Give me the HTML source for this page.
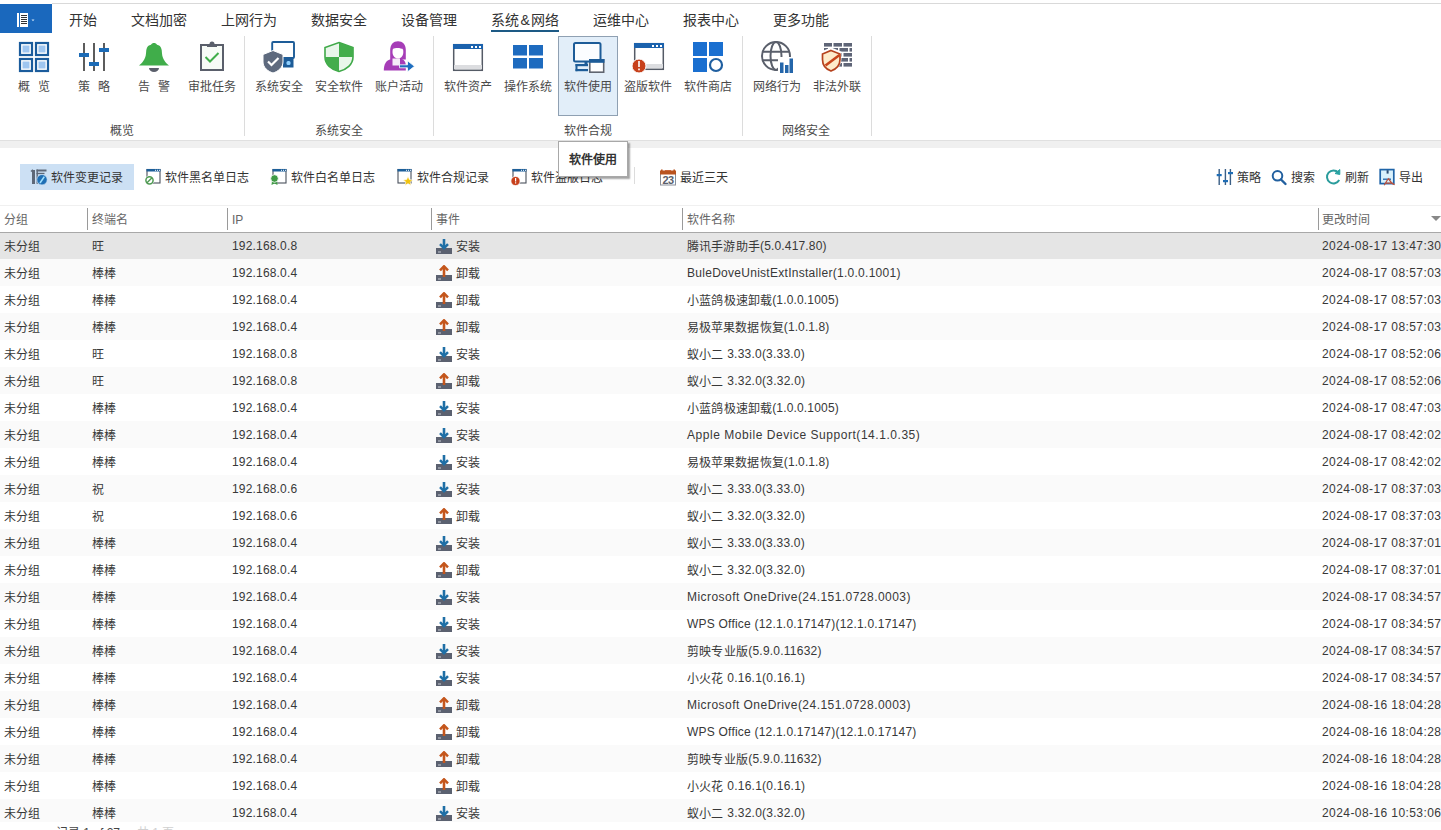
<!DOCTYPE html>
<html lang="zh-CN">
<head>
<meta charset="utf-8">
<style>
*{box-sizing:border-box;margin:0;padding:0}
html,body{width:1441px;height:830px;overflow:hidden;background:#fff}
body{position:relative;font-family:"Liberation Sans",sans-serif;font-size:12px;color:#333}
.a{position:absolute;white-space:nowrap}
.tab{position:absolute;top:11px;font-size:14px;line-height:19px;color:#333;white-space:nowrap}
.rl{position:absolute;top:79px;font-size:12px;line-height:16px;color:#4a4a4a;white-space:nowrap;text-align:center}
.gl{position:absolute;top:123px;font-size:12px;line-height:16px;color:#4a4a4a;white-space:nowrap;text-align:center}
.vs{position:absolute;top:36px;height:100px;width:1px;background:#dcdcdc}
.ico{position:absolute;top:41px}
.tb{position:absolute;top:170px;font-size:12px;line-height:16px;color:#333;white-space:nowrap}
.hd{position:absolute;top:212px;font-size:12px;line-height:16px;color:#666;white-space:nowrap}
.hs{position:absolute;top:208px;height:22px;width:1px;background:#9a9a9a}
.row{position:absolute;left:0;width:1441px;height:27px}
.c{position:absolute;top:7px;line-height:16px;color:#383838;white-space:nowrap}
.ic{position:absolute;top:6px;width:17px;height:17px}
.ic svg{display:block}
</style>
</head>
<body>
<!-- top line -->
<div class="a" style="left:52px;top:3px;width:1389px;height:1px;background:#d9d9d9"></div>
<!-- app button -->
<div class="a" style="left:0;top:4px;width:52px;height:29px;background:#1a68bd">
<svg width="52" height="29" viewBox="0 0 52 29"><rect x="17" y="9" width="2" height="14" fill="#fff"/><rect x="20" y="9" width="8" height="14" fill="#fff"/><rect x="21" y="11" width="6" height="1" fill="#333"/><rect x="21" y="13" width="6" height="1" fill="#333"/><rect x="21" y="15" width="6" height="1" fill="#333"/><rect x="21" y="17" width="6" height="1" fill="#333"/><rect x="21" y="19" width="6" height="1" fill="#333"/><path d="M31.5 15.5h3l-1.5 1.8z" fill="#cfe4f7"/></svg>
</div>
<!-- tabs -->
<div class="tab" style="left:69px">开始</div>
<div class="tab" style="left:131px">文档加密</div>
<div class="tab" style="left:221px">上网行为</div>
<div class="tab" style="left:311px">数据安全</div>
<div class="tab" style="left:401px">设备管理</div>
<div class="tab" style="left:491px">系统<span style="margin:0 1.5px">&amp;</span>网络</div>
<div class="a" style="left:491px;top:30px;width:68px;height:2px;background:#1d5a85"></div>
<div class="tab" style="left:593px">运维中心</div>
<div class="tab" style="left:683px">报表中心</div>
<div class="tab" style="left:773px">更多功能</div>

<!-- ribbon -->
<div class="a" style="left:558px;top:36px;width:60px;height:80px;background:#e2eef9;border:1px solid #8fa0b2"></div>
<div class="vs" style="left:244px"></div>
<div class="vs" style="left:433px"></div>
<div class="vs" style="left:742px"></div>
<div class="vs" style="left:871px"></div>

<div class="rl" style="left:18px">概</div><div class="rl" style="left:38px">览</div>
<div class="rl" style="left:78px">策</div><div class="rl" style="left:98px">略</div>
<div class="rl" style="left:138px">告</div><div class="rl" style="left:158px">警</div>
<div class="rl" style="left:188px">审批任务</div>
<div class="rl" style="left:255px">系统安全</div>
<div class="rl" style="left:315px">安全软件</div>
<div class="rl" style="left:375px">账户活动</div>
<div class="rl" style="left:444px">软件资产</div>
<div class="rl" style="left:504px">操作系统</div>
<div class="rl" style="left:564px">软件使用</div>
<div class="rl" style="left:624px">盗版软件</div>
<div class="rl" style="left:684px">软件商店</div>
<div class="rl" style="left:753px">网络行为</div>
<div class="rl" style="left:813px">非法外联</div>

<div class="gl" style="left:110px">概览</div>
<div class="gl" style="left:315px">系统安全</div>
<div class="gl" style="left:564px">软件合规</div>
<div class="gl" style="left:782px">网络安全</div>

<svg class="a" style="left:0;top:0" width="1441" height="205" viewBox="0 0 1441 205">
<!-- 概览 grid -->
<g fill="#fff" stroke="#1b5c9c" stroke-width="2.2">
<rect x="20" y="43" width="12" height="12"/><rect x="36" y="43" width="12" height="12"/>
<rect x="20" y="59" width="12" height="12"/><rect x="36" y="59" width="12" height="12"/>
</g>
<g fill="#9fc6f0">
<rect x="22.5" y="45.5" width="7" height="7"/><rect x="38.5" y="45.5" width="7" height="7"/>
<rect x="22.5" y="61.5" width="7" height="7"/><rect x="38.5" y="61.5" width="7" height="7"/>
</g>
<!-- 策略 sliders -->
<g fill="#5c5c5c"><rect x="83" y="43" width="2" height="28"/><rect x="93" y="43" width="2" height="28"/><rect x="103" y="43" width="2" height="28"/></g>
<g fill="#1c6bb6"><rect x="79" y="53" width="10" height="4"/><rect x="89" y="62" width="10" height="4"/><rect x="99" y="48" width="10" height="4"/></g>
<!-- 告警 bell -->
<path d="M149 68a5 4 0 0 0 10 0z" fill="#5a5f6b"/>
<path d="M139 65.5C142 63 145.5 59.5 146 53.5L146.3 50C146.8 46.5 149 45 151 44.8C152 42.5 156 42.5 157 44.8C159 45 161.2 46.5 161.7 50L162 53.5C162.5 59.5 166 63 169 65.5Z" fill="#40ad4a"/>
<!-- 审批任务 clipboard -->
<rect x="201" y="45" width="22" height="25" fill="#f7fbf7" stroke="#5a5f6b" stroke-width="2"/>
<path d="M207 47V44h2.5a2.5 2.5 0 0 1 5 0H217v3z" fill="#5a5f6b"/>
<path d="M205.5 57L210 61.5L218.5 53" fill="none" stroke="#40ad4a" stroke-width="2"/>
<!-- 系统安全 -->
<rect x="272.2" y="42" width="21.8" height="16" rx="1" fill="#fff" stroke="#1d5c98" stroke-width="1.9"/>
<rect x="283" y="57.5" width="10.5" height="10" fill="#1d5c98"/><rect x="286.5" y="61" width="4" height="4" rx="1.5" fill="#8fd0ff"/>
<path d="M263 54.5L273 50.5L283 54.5V62C283 67.5 278 71.5 273 73C268 71.5 263 67.5 263 62Z" fill="#5e6a7e" stroke="#fff" stroke-width="1"/>
<path d="M268 61.5L271.5 65L278.5 58" fill="none" stroke="#fff" stroke-width="2.2"/>
<!-- 安全软件 shield -->
<path d="M339 42.5L353 47.5V57C353 64.5 346.5 69.5 339 71.5C331.5 69.5 325 64.5 325 57V47.5Z" fill="#e9f6ea" stroke="#3fa948" stroke-width="1.6"/>
<path d="M339 42.5L353 47.5V57H339Z" fill="#44ad4c"/>
<path d="M339 57H325C325 64.5 331.5 69.5 339 71.5Z" fill="#44ad4c"/>
<!-- 账户活动 person -->
<path d="M383.8 70.5C383.8 64 386 60.5 391 59L395 58.5L402 59C404.5 60 405.8 62 405.8 66V70.5Z" fill="#a63db7"/>
<path d="M390.2 59.5V50C390.2 44.5 393.5 41.2 398 41.2C402.5 41.2 405.8 44.5 405.8 50V59.5Z" fill="#a63db7"/>
<path d="M392.5 52C392.5 47.5 394 46.5 398 46.5C402 46.5 403.3 47.5 403.3 52C403.3 56 401 58.5 398 58.5C395 58.5 392.5 56 392.5 52Z" fill="#fff"/>
<path d="M393 49C395 47.5 401 47.5 403 49.5L402.5 46C400 44.5 396 44.5 393.5 46Z" fill="#a63db7"/>
<path d="M392.5 58.5H400V65.5H392.5Z" fill="#fff" opacity="0.9"/>
<path d="M399.5 64.8H407.5V60.8L414.5 66.3L407.5 71.8V67.8H399.5Z" fill="#1f6fc0" stroke="#fff" stroke-width="0.8"/>
<!-- 软件资产 window -->
<rect x="453.7" y="44.7" width="28.6" height="25.6" fill="#fff" stroke="#555b66" stroke-width="1.5"/>
<rect x="453" y="44" width="30" height="5" fill="#1b62ad"/>
<rect x="454" y="65" width="28" height="4" fill="#dcdde0"/>
<g fill="#fff"><rect x="471" y="46" width="2" height="2"/><rect x="475" y="46" width="2" height="2"/><rect x="479" y="46" width="2" height="2"/></g>
<!-- 操作系统 -->
<g fill="#1e6bbf"><rect x="513" y="45" width="14" height="10.5"/><rect x="529" y="45" width="14" height="10.5"/><rect x="513" y="58" width="14" height="10.5"/><rect x="529" y="58" width="14" height="10.5"/></g>
<!-- 软件使用 -->
<rect x="574" y="43" width="26.5" height="18.5" rx="1.5" fill="#fbfdff" stroke="#1d5c98" stroke-width="2"/>
<rect x="584.5" y="61" width="3" height="3.5" fill="#1d5c98"/>
<rect x="575.5" y="64" width="12.5" height="2.2" fill="#1d5c98"/>
<rect x="575.5" y="64" width="2" height="7.2" fill="#1d5c98"/>
<rect x="575.5" y="69" width="12.5" height="2.2" fill="#1d5c98"/>
<rect x="589" y="59" width="15.5" height="14" fill="#fff"/>
<rect x="589.8" y="59.8" width="13.9" height="12.4" fill="#fff" stroke="#5f6570" stroke-width="1.6"/>
<rect x="589" y="59" width="15.5" height="3.8" fill="#1d5c98"/>
<!-- 盗版软件 -->
<rect x="634.7" y="43.7" width="28.6" height="25.6" fill="#fff" stroke="#555b66" stroke-width="1.5"/>
<rect x="634" y="43" width="30" height="5" fill="#1b62ad"/>
<rect x="635" y="64" width="28" height="4" fill="#dcdde0"/>
<g fill="#fff"><rect x="652" y="45" width="2" height="2"/><rect x="656" y="45" width="2" height="2"/><rect x="660" y="45" width="2" height="2"/></g>
<circle cx="639" cy="66" r="7" fill="#c7401b" stroke="#fff" stroke-width="1"/>
<rect x="638.2" y="61" width="1.6" height="6" fill="#fff"/><rect x="638.2" y="68.5" width="1.6" height="1.8" fill="#fff"/>
<!-- 软件商店 -->
<g fill="#1a6fd0"><rect x="693" y="42" width="14" height="14"/><rect x="709" y="42" width="14" height="14"/><rect x="693" y="58" width="14" height="14"/></g>
<circle cx="716" cy="65" r="6" fill="#fff" stroke="#1f5fa0" stroke-width="2.2"/>
<!-- 网络行为 globe -->
<g fill="none" stroke="#5a5f6b" stroke-width="2">
<circle cx="776" cy="56" r="14"/><ellipse cx="776" cy="56" rx="5.5" ry="14"/>
<path d="M763 51.8H789M763 60.2H789"/>
</g>
<rect x="778" y="57" width="17" height="17" fill="#fff"/>
<g fill="#2466aa"><rect x="780" y="62.5" width="3.5" height="10.5"/><rect x="785" y="65" width="3.5" height="8"/><rect x="789.5" y="58.5" width="3.5" height="14.5"/></g>
<!-- 非法外联 wall -->
<g fill="#5f6577">
<rect x="824" y="43" width="8" height="3.6"/><rect x="833.5" y="43" width="8.5" height="3.6"/><rect x="843.5" y="43" width="8.5" height="3.6"/>
<rect x="824" y="48" width="4" height="3.6"/><rect x="829.5" y="48" width="8.5" height="3.6"/><rect x="839.5" y="48" width="8.5" height="3.6"/><rect x="849.5" y="48" width="2.5" height="3.6"/>
<rect x="824" y="53" width="8" height="3.6"/><rect x="833.5" y="53" width="8.5" height="3.6"/><rect x="843.5" y="53" width="8.5" height="3.6"/>
<rect x="829.5" y="58" width="8.5" height="3.6"/><rect x="839.5" y="58" width="8.5" height="3.6"/><rect x="849.5" y="58" width="2.5" height="3.6"/>
<rect x="833.5" y="63" width="8.5" height="3.6"/><rect x="843.5" y="63" width="8.5" height="3.6"/>
</g>
<path d="M831 48.5L840.5 52.5V59C840.5 64.5 836.5 69 831 71.5C825.5 69 821.5 64.5 821.5 59V52.5Z" fill="#fff" stroke="#fff" stroke-width="2"/>
<path d="M831 50.5L840 54V59.5C840 64.5 836.5 69 831 71C825.5 69 822.5 64.5 822.5 59.5V54Z" fill="#feeccb" stroke="#b5431e" stroke-width="1.7"/>
<path d="M825.5 65.5L839.5 55" stroke="#c8461c" stroke-width="2.6"/>
</svg>


<!-- gray band -->
<div class="a" style="left:0;top:140px;width:1441px;height:8px;background:#f0f0f0;border-top:1px solid #e0e0e0"></div>

<!-- toolbar -->
<div class="a" style="left:20px;top:164px;width:114px;height:26px;background:#cce0f4"></div>
<div class="tb" style="left:51px">软件变更记录</div>
<div class="tb" style="left:165px">软件黑名单日志</div>
<div class="tb" style="left:291px">软件白名单日志</div>
<div class="tb" style="left:417px">软件合规记录</div>
<div class="tb" style="left:531px">软件盗版日志</div>
<div class="a" style="left:634px;top:167px;width:1px;height:17px;background:#dcdcdc"></div>
<div class="tb" style="left:680px">最近三天</div>
<div class="tb" style="left:1237px">策略</div>
<div class="tb" style="left:1291px">搜索</div>
<div class="tb" style="left:1345px">刷新</div>
<div class="tb" style="left:1399px">导出</div>
<svg class="a" style="left:0;top:150px" width="1441" height="50" viewBox="0 150 1441 50">
<!-- 软件变更记录 -->
<rect x="32" y="170" width="3" height="14" fill="#5d6878"/>
<path d="M31 171.5L33 169.8" stroke="#5d6878" stroke-width="1.5"/>
<rect x="36.5" y="169.5" width="10" height="2" fill="#5d6878"/>
<rect x="36.5" y="172.8" width="8" height="1.4" fill="#5d6878"/>
<rect x="36.5" y="169.5" width="1.4" height="14.3" fill="#5d6878"/>
<circle cx="42" cy="179.7" r="5.2" fill="#1f6fb5" stroke="#cfe2f5" stroke-width="0.7"/>
<path d="M40 183L44.3 176.6" stroke="#9fe0ff" stroke-width="1.6"/>
<!-- 黑名单 -->
<rect x="147" y="169.5" width="13" height="13.5" fill="#fff" stroke="#4a505c" stroke-width="1.1"/>
<rect x="146.5" y="169" width="14" height="2.5" fill="#1d5f99"/>
<g fill="#fff"><rect x="155" y="169.8" width="1" height="1"/><rect x="157" y="169.8" width="1" height="1"/><rect x="159" y="169.8" width="1" height="1"/></g>
<circle cx="149.5" cy="180.3" r="4.7" fill="#fff"/>
<circle cx="149.5" cy="180.3" r="3.6" fill="none" stroke="#4f9a53" stroke-width="1.5"/>
<path d="M147 182.8L152 177.8" stroke="#4f9a53" stroke-width="1.5"/>
<!-- 白名单 -->
<rect x="273" y="169.5" width="13" height="13.5" fill="#fff" stroke="#4a505c" stroke-width="1.1"/>
<rect x="272.5" y="169" width="14" height="2.5" fill="#1d5f99"/>
<g fill="#fff"><rect x="281" y="169.8" width="1" height="1"/><rect x="283" y="169.8" width="1" height="1"/><rect x="285" y="169.8" width="1" height="1"/></g>
<path d="M272 181L271.5 185L274.5 183.5L277.5 185L277 181Z" fill="#3f9a45"/>
<circle cx="274.5" cy="178.5" r="3.8" fill="#3f9a45" stroke="#fff" stroke-width="0.8"/>
<!-- 合规记录 -->
<rect x="398" y="169.5" width="13" height="13.5" fill="#fff" stroke="#4a505c" stroke-width="1.1"/>
<rect x="397.5" y="169" width="14" height="2.5" fill="#1d5f99"/>
<g fill="#fff"><rect x="406" y="169.8" width="1" height="1"/><rect x="408" y="169.8" width="1" height="1"/><rect x="410" y="169.8" width="1" height="1"/></g>
<path d="M408 176.5L409.4 179.6L412.8 179.9L410.2 182.1L411 185.4L408 183.6L405 185.4L405.8 182.1L403.2 179.9L406.6 179.6Z" fill="#f2c40f" stroke="#fff" stroke-width="0.6"/>
<!-- 盗版日志 -->
<rect x="513" y="169.5" width="13" height="13.5" fill="#fff" stroke="#4a505c" stroke-width="1.1"/>
<rect x="512.5" y="169" width="14" height="2.5" fill="#1d5f99"/>
<g fill="#fff"><rect x="521" y="169.8" width="1" height="1"/><rect x="523" y="169.8" width="1" height="1"/><rect x="525" y="169.8" width="1" height="1"/></g>
<circle cx="515.5" cy="181" r="4.6" fill="#c7401b" stroke="#fff" stroke-width="0.8"/>
<rect x="515" y="178" width="1.2" height="3.5" fill="#fff"/><rect x="515" y="182.3" width="1.2" height="1.2" fill="#fff"/>
<!-- calendar -->
<rect x="660.5" y="172" width="15" height="13" fill="#fff" stroke="#8a8f99" stroke-width="1"/>
<rect x="660" y="170.5" width="16" height="4" fill="#b9531f"/>
<rect x="661" y="169.5" width="1.6" height="3" fill="#b9531f"/><rect x="673.4" y="169.5" width="1.6" height="3" fill="#b9531f"/>
<rect x="665" y="170" width="6" height="1" fill="#c8643a"/>
<text x="668" y="184" font-family="Liberation Sans" font-size="11" font-weight="bold" fill="#5a606c" text-anchor="middle" letter-spacing="-0.6">23</text>
<!-- strategy sliders small -->
<g fill="#3b5f86"><rect x="1218.5" y="169" width="1.4" height="16"/><rect x="1224.7" y="169" width="1.4" height="16"/><rect x="1229.7" y="169" width="1.4" height="16"/></g>
<g fill="#1f6db5"><rect x="1216.7" y="174" width="5" height="2.2"/><rect x="1223" y="180" width="5" height="2.2"/><rect x="1228" y="172" width="5" height="2.2"/></g>
<!-- search -->
<circle cx="1277.5" cy="175.8" r="4.8" fill="none" stroke="#22609f" stroke-width="2"/>
<path d="M1281 179.5L1285.5 184" stroke="#22609f" stroke-width="2.4" stroke-linecap="round"/>
<!-- refresh -->
<path d="M1338.3 172.5A6.5 6.5 0 1 0 1339.2 180" fill="none" stroke="#2a9c9c" stroke-width="2"/>
<path d="M1335 173.5L1339.8 169.5V174.5Z" fill="#29a3a3" stroke="#29a3a3" stroke-width="1"/>
<!-- export floppy -->
<rect x="1380.2" y="169.6" width="13.6" height="14" fill="#d9f1fc" stroke="#1f64a8" stroke-width="1.7"/>
<rect x="1386.6" y="170.2" width="2" height="3.4" fill="#2b4d74"/>
<path d="M1383 179.2H1391" stroke="#1f64a8" stroke-width="1.3"/>
<path d="M1384.2 185.3C1386 182 1387.5 179.5 1388.6 178.6C1389.6 180.5 1391.5 183.5 1394.6 184.6M1385.5 183.2H1392" fill="none" stroke="#c0503a" stroke-width="1.2"/>
</svg>


<!-- header -->
<div class="a" style="left:0;top:205px;width:1441px;height:1px;background:#f0f0f0"></div>
<div class="hd" style="left:4px">分组</div>
<div class="hs" style="left:87px"></div>
<div class="hd" style="left:92px">终端名</div>
<div class="hs" style="left:227px"></div>
<div class="hd" style="left:232px">IP</div>
<div class="hs" style="left:431px"></div>
<div class="hd" style="left:436px">事件</div>
<div class="hs" style="left:682px"></div>
<div class="hd" style="left:687px">软件名称</div>
<div class="hs" style="left:1318px"></div>
<div class="hd" style="left:1322px">更改时间</div>
<div class="a" style="left:1431px;top:216px;width:0;height:0;border-left:5px solid transparent;border-right:5px solid transparent;border-top:5px solid #888"></div>
<div class="row" style="top:232px;background:#e5e5e5"><span class="c" style="left:4px">未分组</span><span class="c" style="left:92px">旺</span><span class="c" style="left:232px;top:6px;letter-spacing:0.17px">192.168.0.8</span><span class="ic" style="left:436px"><svg width="17" height="17" viewBox="0 0 17 17"><rect x="0" y="10" width="16" height="6" fill="#5b6170"/><rect x="2" y="13.5" width="3" height="1" fill="#c8ccd4"/><path d="M8 1v9" stroke="#1f6fa6" stroke-width="2.6"/><path d="M4 6.2L8 10.2L12 6.2" fill="none" stroke="#1f6fa6" stroke-width="2.5"/></svg></span><span class="c" style="left:456px">安装</span><span class="c" style="left:687px;letter-spacing:0.165px">腾讯手游助手<span style="position:relative;top:-1px">(5.0.417.80)</span></span><span class="c" style="left:1322px;top:6px;letter-spacing:0.42px">2024-08-17 13:47:30</span></div>
<div class="row" style="top:259px;background:#fafafa"><span class="c" style="left:4px">未分组</span><span class="c" style="left:92px">棒棒</span><span class="c" style="left:232px;top:6px;letter-spacing:0.17px">192.168.0.4</span><span class="ic" style="left:436px"><svg width="17" height="17" viewBox="0 0 17 17"><rect x="0" y="10" width="16" height="6" fill="#5b6170"/><rect x="2" y="13.5" width="3" height="1" fill="#c8ccd4"/><path d="M8 12V1.5" stroke="#c4561c" stroke-width="2.6"/><path d="M4 5.3L8 1.3L12 5.3" fill="none" stroke="#c4561c" stroke-width="2.5"/></svg></span><span class="c" style="left:456px">卸载</span><span class="c" style="left:687px;letter-spacing:0.278px"><span style="position:relative;top:-1px">BuleDoveUnistExtInstaller(1.0.0.1001)</span></span><span class="c" style="left:1322px;top:6px;letter-spacing:0.42px">2024-08-17 08:57:03</span></div>
<div class="row" style="top:286px;background:#ffffff"><span class="c" style="left:4px">未分组</span><span class="c" style="left:92px">棒棒</span><span class="c" style="left:232px;top:6px;letter-spacing:0.17px">192.168.0.4</span><span class="ic" style="left:436px"><svg width="17" height="17" viewBox="0 0 17 17"><rect x="0" y="10" width="16" height="6" fill="#5b6170"/><rect x="2" y="13.5" width="3" height="1" fill="#c8ccd4"/><path d="M8 12V1.5" stroke="#c4561c" stroke-width="2.6"/><path d="M4 5.3L8 1.3L12 5.3" fill="none" stroke="#c4561c" stroke-width="2.5"/></svg></span><span class="c" style="left:456px">卸载</span><span class="c" style="left:687px;letter-spacing:0.167px">小蓝鸽极速卸载<span style="position:relative;top:-1px">(1.0.0.1005)</span></span><span class="c" style="left:1322px;top:6px;letter-spacing:0.42px">2024-08-17 08:57:03</span></div>
<div class="row" style="top:313px;background:#fafafa"><span class="c" style="left:4px">未分组</span><span class="c" style="left:92px">棒棒</span><span class="c" style="left:232px;top:6px;letter-spacing:0.17px">192.168.0.4</span><span class="ic" style="left:436px"><svg width="17" height="17" viewBox="0 0 17 17"><rect x="0" y="10" width="16" height="6" fill="#5b6170"/><rect x="2" y="13.5" width="3" height="1" fill="#c8ccd4"/><path d="M8 12V1.5" stroke="#c4561c" stroke-width="2.6"/><path d="M4 5.3L8 1.3L12 5.3" fill="none" stroke="#c4561c" stroke-width="2.5"/></svg></span><span class="c" style="left:456px">卸载</span><span class="c" style="left:687px;letter-spacing:0.100px">易极苹果数据恢复<span style="position:relative;top:-1px">(1.0.1.8)</span></span><span class="c" style="left:1322px;top:6px;letter-spacing:0.42px">2024-08-17 08:57:03</span></div>
<div class="row" style="top:340px;background:#ffffff"><span class="c" style="left:4px">未分组</span><span class="c" style="left:92px">旺</span><span class="c" style="left:232px;top:6px;letter-spacing:0.17px">192.168.0.8</span><span class="ic" style="left:436px"><svg width="17" height="17" viewBox="0 0 17 17"><rect x="0" y="10" width="16" height="6" fill="#5b6170"/><rect x="2" y="13.5" width="3" height="1" fill="#c8ccd4"/><path d="M8 1v9" stroke="#1f6fa6" stroke-width="2.6"/><path d="M4 6.2L8 10.2L12 6.2" fill="none" stroke="#1f6fa6" stroke-width="2.5"/></svg></span><span class="c" style="left:456px">安装</span><span class="c" style="left:687px;letter-spacing:0.218px">蚁小二<span style="position:relative;top:-1px"> 3.33.0(3.33.0)</span></span><span class="c" style="left:1322px;top:6px;letter-spacing:0.42px">2024-08-17 08:52:06</span></div>
<div class="row" style="top:367px;background:#fafafa"><span class="c" style="left:4px">未分组</span><span class="c" style="left:92px">旺</span><span class="c" style="left:232px;top:6px;letter-spacing:0.17px">192.168.0.8</span><span class="ic" style="left:436px"><svg width="17" height="17" viewBox="0 0 17 17"><rect x="0" y="10" width="16" height="6" fill="#5b6170"/><rect x="2" y="13.5" width="3" height="1" fill="#c8ccd4"/><path d="M8 12V1.5" stroke="#c4561c" stroke-width="2.6"/><path d="M4 5.3L8 1.3L12 5.3" fill="none" stroke="#c4561c" stroke-width="2.5"/></svg></span><span class="c" style="left:456px">卸载</span><span class="c" style="left:687px;letter-spacing:0.235px">蚁小二<span style="position:relative;top:-1px"> 3.32.0(3.32.0)</span></span><span class="c" style="left:1322px;top:6px;letter-spacing:0.42px">2024-08-17 08:52:06</span></div>
<div class="row" style="top:394px;background:#ffffff"><span class="c" style="left:4px">未分组</span><span class="c" style="left:92px">棒棒</span><span class="c" style="left:232px;top:6px;letter-spacing:0.17px">192.168.0.4</span><span class="ic" style="left:436px"><svg width="17" height="17" viewBox="0 0 17 17"><rect x="0" y="10" width="16" height="6" fill="#5b6170"/><rect x="2" y="13.5" width="3" height="1" fill="#c8ccd4"/><path d="M8 1v9" stroke="#1f6fa6" stroke-width="2.6"/><path d="M4 6.2L8 10.2L12 6.2" fill="none" stroke="#1f6fa6" stroke-width="2.5"/></svg></span><span class="c" style="left:456px">安装</span><span class="c" style="left:687px;letter-spacing:0.167px">小蓝鸽极速卸载<span style="position:relative;top:-1px">(1.0.0.1005)</span></span><span class="c" style="left:1322px;top:6px;letter-spacing:0.42px">2024-08-17 08:47:03</span></div>
<div class="row" style="top:421px;background:#fafafa"><span class="c" style="left:4px">未分组</span><span class="c" style="left:92px">棒棒</span><span class="c" style="left:232px;top:6px;letter-spacing:0.17px">192.168.0.4</span><span class="ic" style="left:436px"><svg width="17" height="17" viewBox="0 0 17 17"><rect x="0" y="10" width="16" height="6" fill="#5b6170"/><rect x="2" y="13.5" width="3" height="1" fill="#c8ccd4"/><path d="M8 1v9" stroke="#1f6fa6" stroke-width="2.6"/><path d="M4 6.2L8 10.2L12 6.2" fill="none" stroke="#1f6fa6" stroke-width="2.5"/></svg></span><span class="c" style="left:456px">安装</span><span class="c" style="left:687px;letter-spacing:0.541px"><span style="position:relative;top:-1px">Apple Mobile Device Support(14.1.0.35)</span></span><span class="c" style="left:1322px;top:6px;letter-spacing:0.42px">2024-08-17 08:42:02</span></div>
<div class="row" style="top:448px;background:#ffffff"><span class="c" style="left:4px">未分组</span><span class="c" style="left:92px">棒棒</span><span class="c" style="left:232px;top:6px;letter-spacing:0.17px">192.168.0.4</span><span class="ic" style="left:436px"><svg width="17" height="17" viewBox="0 0 17 17"><rect x="0" y="10" width="16" height="6" fill="#5b6170"/><rect x="2" y="13.5" width="3" height="1" fill="#c8ccd4"/><path d="M8 1v9" stroke="#1f6fa6" stroke-width="2.6"/><path d="M4 6.2L8 10.2L12 6.2" fill="none" stroke="#1f6fa6" stroke-width="2.5"/></svg></span><span class="c" style="left:456px">安装</span><span class="c" style="left:687px;letter-spacing:0.100px">易极苹果数据恢复<span style="position:relative;top:-1px">(1.0.1.8)</span></span><span class="c" style="left:1322px;top:6px;letter-spacing:0.42px">2024-08-17 08:42:02</span></div>
<div class="row" style="top:475px;background:#fafafa"><span class="c" style="left:4px">未分组</span><span class="c" style="left:92px">祝</span><span class="c" style="left:232px;top:6px;letter-spacing:0.17px">192.168.0.6</span><span class="ic" style="left:436px"><svg width="17" height="17" viewBox="0 0 17 17"><rect x="0" y="10" width="16" height="6" fill="#5b6170"/><rect x="2" y="13.5" width="3" height="1" fill="#c8ccd4"/><path d="M8 1v9" stroke="#1f6fa6" stroke-width="2.6"/><path d="M4 6.2L8 10.2L12 6.2" fill="none" stroke="#1f6fa6" stroke-width="2.5"/></svg></span><span class="c" style="left:456px">安装</span><span class="c" style="left:687px;letter-spacing:0.218px">蚁小二<span style="position:relative;top:-1px"> 3.33.0(3.33.0)</span></span><span class="c" style="left:1322px;top:6px;letter-spacing:0.42px">2024-08-17 08:37:03</span></div>
<div class="row" style="top:502px;background:#ffffff"><span class="c" style="left:4px">未分组</span><span class="c" style="left:92px">祝</span><span class="c" style="left:232px;top:6px;letter-spacing:0.17px">192.168.0.6</span><span class="ic" style="left:436px"><svg width="17" height="17" viewBox="0 0 17 17"><rect x="0" y="10" width="16" height="6" fill="#5b6170"/><rect x="2" y="13.5" width="3" height="1" fill="#c8ccd4"/><path d="M8 12V1.5" stroke="#c4561c" stroke-width="2.6"/><path d="M4 5.3L8 1.3L12 5.3" fill="none" stroke="#c4561c" stroke-width="2.5"/></svg></span><span class="c" style="left:456px">卸载</span><span class="c" style="left:687px;letter-spacing:0.235px">蚁小二<span style="position:relative;top:-1px"> 3.32.0(3.32.0)</span></span><span class="c" style="left:1322px;top:6px;letter-spacing:0.42px">2024-08-17 08:37:03</span></div>
<div class="row" style="top:529px;background:#fafafa"><span class="c" style="left:4px">未分组</span><span class="c" style="left:92px">棒棒</span><span class="c" style="left:232px;top:6px;letter-spacing:0.17px">192.168.0.4</span><span class="ic" style="left:436px"><svg width="17" height="17" viewBox="0 0 17 17"><rect x="0" y="10" width="16" height="6" fill="#5b6170"/><rect x="2" y="13.5" width="3" height="1" fill="#c8ccd4"/><path d="M8 1v9" stroke="#1f6fa6" stroke-width="2.6"/><path d="M4 6.2L8 10.2L12 6.2" fill="none" stroke="#1f6fa6" stroke-width="2.5"/></svg></span><span class="c" style="left:456px">安装</span><span class="c" style="left:687px;letter-spacing:0.218px">蚁小二<span style="position:relative;top:-1px"> 3.33.0(3.33.0)</span></span><span class="c" style="left:1322px;top:6px;letter-spacing:0.42px">2024-08-17 08:37:01</span></div>
<div class="row" style="top:556px;background:#ffffff"><span class="c" style="left:4px">未分组</span><span class="c" style="left:92px">棒棒</span><span class="c" style="left:232px;top:6px;letter-spacing:0.17px">192.168.0.4</span><span class="ic" style="left:436px"><svg width="17" height="17" viewBox="0 0 17 17"><rect x="0" y="10" width="16" height="6" fill="#5b6170"/><rect x="2" y="13.5" width="3" height="1" fill="#c8ccd4"/><path d="M8 12V1.5" stroke="#c4561c" stroke-width="2.6"/><path d="M4 5.3L8 1.3L12 5.3" fill="none" stroke="#c4561c" stroke-width="2.5"/></svg></span><span class="c" style="left:456px">卸载</span><span class="c" style="left:687px;letter-spacing:0.235px">蚁小二<span style="position:relative;top:-1px"> 3.32.0(3.32.0)</span></span><span class="c" style="left:1322px;top:6px;letter-spacing:0.42px">2024-08-17 08:37:01</span></div>
<div class="row" style="top:583px;background:#fafafa"><span class="c" style="left:4px">未分组</span><span class="c" style="left:92px">棒棒</span><span class="c" style="left:232px;top:6px;letter-spacing:0.17px">192.168.0.4</span><span class="ic" style="left:436px"><svg width="17" height="17" viewBox="0 0 17 17"><rect x="0" y="10" width="16" height="6" fill="#5b6170"/><rect x="2" y="13.5" width="3" height="1" fill="#c8ccd4"/><path d="M8 1v9" stroke="#1f6fa6" stroke-width="2.6"/><path d="M4 6.2L8 10.2L12 6.2" fill="none" stroke="#1f6fa6" stroke-width="2.5"/></svg></span><span class="c" style="left:456px">安装</span><span class="c" style="left:687px;letter-spacing:0.457px"><span style="position:relative;top:-1px">Microsoft OneDrive(24.151.0728.0003)</span></span><span class="c" style="left:1322px;top:6px;letter-spacing:0.42px">2024-08-17 08:34:57</span></div>
<div class="row" style="top:610px;background:#ffffff"><span class="c" style="left:4px">未分组</span><span class="c" style="left:92px">棒棒</span><span class="c" style="left:232px;top:6px;letter-spacing:0.17px">192.168.0.4</span><span class="ic" style="left:436px"><svg width="17" height="17" viewBox="0 0 17 17"><rect x="0" y="10" width="16" height="6" fill="#5b6170"/><rect x="2" y="13.5" width="3" height="1" fill="#c8ccd4"/><path d="M8 1v9" stroke="#1f6fa6" stroke-width="2.6"/><path d="M4 6.2L8 10.2L12 6.2" fill="none" stroke="#1f6fa6" stroke-width="2.5"/></svg></span><span class="c" style="left:456px">安装</span><span class="c" style="left:687px;letter-spacing:0.211px"><span style="position:relative;top:-1px">WPS Office (12.1.0.17147)(12.1.0.17147)</span></span><span class="c" style="left:1322px;top:6px;letter-spacing:0.42px">2024-08-17 08:34:57</span></div>
<div class="row" style="top:637px;background:#fafafa"><span class="c" style="left:4px">未分组</span><span class="c" style="left:92px">棒棒</span><span class="c" style="left:232px;top:6px;letter-spacing:0.17px">192.168.0.4</span><span class="ic" style="left:436px"><svg width="17" height="17" viewBox="0 0 17 17"><rect x="0" y="10" width="16" height="6" fill="#5b6170"/><rect x="2" y="13.5" width="3" height="1" fill="#c8ccd4"/><path d="M8 1v9" stroke="#1f6fa6" stroke-width="2.6"/><path d="M4 6.2L8 10.2L12 6.2" fill="none" stroke="#1f6fa6" stroke-width="2.5"/></svg></span><span class="c" style="left:456px">安装</span><span class="c" style="left:687px;letter-spacing:0.235px">剪映专业版<span style="position:relative;top:-1px">(5.9.0.11632)</span></span><span class="c" style="left:1322px;top:6px;letter-spacing:0.42px">2024-08-17 08:34:57</span></div>
<div class="row" style="top:664px;background:#ffffff"><span class="c" style="left:4px">未分组</span><span class="c" style="left:92px">棒棒</span><span class="c" style="left:232px;top:6px;letter-spacing:0.17px">192.168.0.4</span><span class="ic" style="left:436px"><svg width="17" height="17" viewBox="0 0 17 17"><rect x="0" y="10" width="16" height="6" fill="#5b6170"/><rect x="2" y="13.5" width="3" height="1" fill="#c8ccd4"/><path d="M8 1v9" stroke="#1f6fa6" stroke-width="2.6"/><path d="M4 6.2L8 10.2L12 6.2" fill="none" stroke="#1f6fa6" stroke-width="2.5"/></svg></span><span class="c" style="left:456px">安装</span><span class="c" style="left:687px;letter-spacing:0.235px">小火花<span style="position:relative;top:-1px"> 0.16.1(0.16.1)</span></span><span class="c" style="left:1322px;top:6px;letter-spacing:0.42px">2024-08-17 08:34:57</span></div>
<div class="row" style="top:691px;background:#fafafa"><span class="c" style="left:4px">未分组</span><span class="c" style="left:92px">棒棒</span><span class="c" style="left:232px;top:6px;letter-spacing:0.17px">192.168.0.4</span><span class="ic" style="left:436px"><svg width="17" height="17" viewBox="0 0 17 17"><rect x="0" y="10" width="16" height="6" fill="#5b6170"/><rect x="2" y="13.5" width="3" height="1" fill="#c8ccd4"/><path d="M8 12V1.5" stroke="#c4561c" stroke-width="2.6"/><path d="M4 5.3L8 1.3L12 5.3" fill="none" stroke="#c4561c" stroke-width="2.5"/></svg></span><span class="c" style="left:456px">卸载</span><span class="c" style="left:687px;letter-spacing:0.457px"><span style="position:relative;top:-1px">Microsoft OneDrive(24.151.0728.0003)</span></span><span class="c" style="left:1322px;top:6px;letter-spacing:0.42px">2024-08-16 18:04:28</span></div>
<div class="row" style="top:718px;background:#ffffff"><span class="c" style="left:4px">未分组</span><span class="c" style="left:92px">棒棒</span><span class="c" style="left:232px;top:6px;letter-spacing:0.17px">192.168.0.4</span><span class="ic" style="left:436px"><svg width="17" height="17" viewBox="0 0 17 17"><rect x="0" y="10" width="16" height="6" fill="#5b6170"/><rect x="2" y="13.5" width="3" height="1" fill="#c8ccd4"/><path d="M8 12V1.5" stroke="#c4561c" stroke-width="2.6"/><path d="M4 5.3L8 1.3L12 5.3" fill="none" stroke="#c4561c" stroke-width="2.5"/></svg></span><span class="c" style="left:456px">卸载</span><span class="c" style="left:687px;letter-spacing:0.211px"><span style="position:relative;top:-1px">WPS Office (12.1.0.17147)(12.1.0.17147)</span></span><span class="c" style="left:1322px;top:6px;letter-spacing:0.42px">2024-08-16 18:04:28</span></div>
<div class="row" style="top:745px;background:#fafafa"><span class="c" style="left:4px">未分组</span><span class="c" style="left:92px">棒棒</span><span class="c" style="left:232px;top:6px;letter-spacing:0.17px">192.168.0.4</span><span class="ic" style="left:436px"><svg width="17" height="17" viewBox="0 0 17 17"><rect x="0" y="10" width="16" height="6" fill="#5b6170"/><rect x="2" y="13.5" width="3" height="1" fill="#c8ccd4"/><path d="M8 12V1.5" stroke="#c4561c" stroke-width="2.6"/><path d="M4 5.3L8 1.3L12 5.3" fill="none" stroke="#c4561c" stroke-width="2.5"/></svg></span><span class="c" style="left:456px">卸载</span><span class="c" style="left:687px;letter-spacing:0.235px">剪映专业版<span style="position:relative;top:-1px">(5.9.0.11632)</span></span><span class="c" style="left:1322px;top:6px;letter-spacing:0.42px">2024-08-16 18:04:28</span></div>
<div class="row" style="top:772px;background:#ffffff"><span class="c" style="left:4px">未分组</span><span class="c" style="left:92px">棒棒</span><span class="c" style="left:232px;top:6px;letter-spacing:0.17px">192.168.0.4</span><span class="ic" style="left:436px"><svg width="17" height="17" viewBox="0 0 17 17"><rect x="0" y="10" width="16" height="6" fill="#5b6170"/><rect x="2" y="13.5" width="3" height="1" fill="#c8ccd4"/><path d="M8 12V1.5" stroke="#c4561c" stroke-width="2.6"/><path d="M4 5.3L8 1.3L12 5.3" fill="none" stroke="#c4561c" stroke-width="2.5"/></svg></span><span class="c" style="left:456px">卸载</span><span class="c" style="left:687px;letter-spacing:0.235px">小火花<span style="position:relative;top:-1px"> 0.16.1(0.16.1)</span></span><span class="c" style="left:1322px;top:6px;letter-spacing:0.42px">2024-08-16 18:04:28</span></div>
<div class="row" style="top:799px;background:#fafafa"><span class="c" style="left:4px">未分组</span><span class="c" style="left:92px">棒棒</span><span class="c" style="left:232px;top:6px;letter-spacing:0.17px">192.168.0.4</span><span class="ic" style="left:436px"><svg width="17" height="17" viewBox="0 0 17 17"><rect x="0" y="10" width="16" height="6" fill="#5b6170"/><rect x="2" y="13.5" width="3" height="1" fill="#c8ccd4"/><path d="M8 1v9" stroke="#1f6fa6" stroke-width="2.6"/><path d="M4 6.2L8 10.2L12 6.2" fill="none" stroke="#1f6fa6" stroke-width="2.5"/></svg></span><span class="c" style="left:456px">安装</span><span class="c" style="left:687px;letter-spacing:0.235px">蚁小二<span style="position:relative;top:-1px"> 3.32.0(3.32.0)</span></span><span class="c" style="left:1322px;top:6px;letter-spacing:0.42px">2024-08-16 10:53:06</span></div>
<div class="a" style="left:0;top:232px;width:1441px;height:1px;background:#a8a8a8"></div>

<div class="a" style="left:0;top:822px;width:1441px;height:8px;background:#fff"></div>
<div class="a" style="left:56px;top:825px;font-size:12px;line-height:16px;color:#444">记录 1 of 27</div><div class="a" style="left:137px;top:825px;font-size:12px;line-height:16px;color:#d0d0d0">共 1 页</div>

<!-- tooltip -->
<div class="a" style="left:558px;top:141px;width:70px;height:36px;background:#fff;border:1px solid #a8a8a8;box-shadow:2px 2px 1.5px rgba(0,0,0,0.35)"></div>
<div class="a" style="left:569px;top:152px;font-size:12px;line-height:16px;font-weight:bold;color:#333">软件使用</div>
</body>
</html>
